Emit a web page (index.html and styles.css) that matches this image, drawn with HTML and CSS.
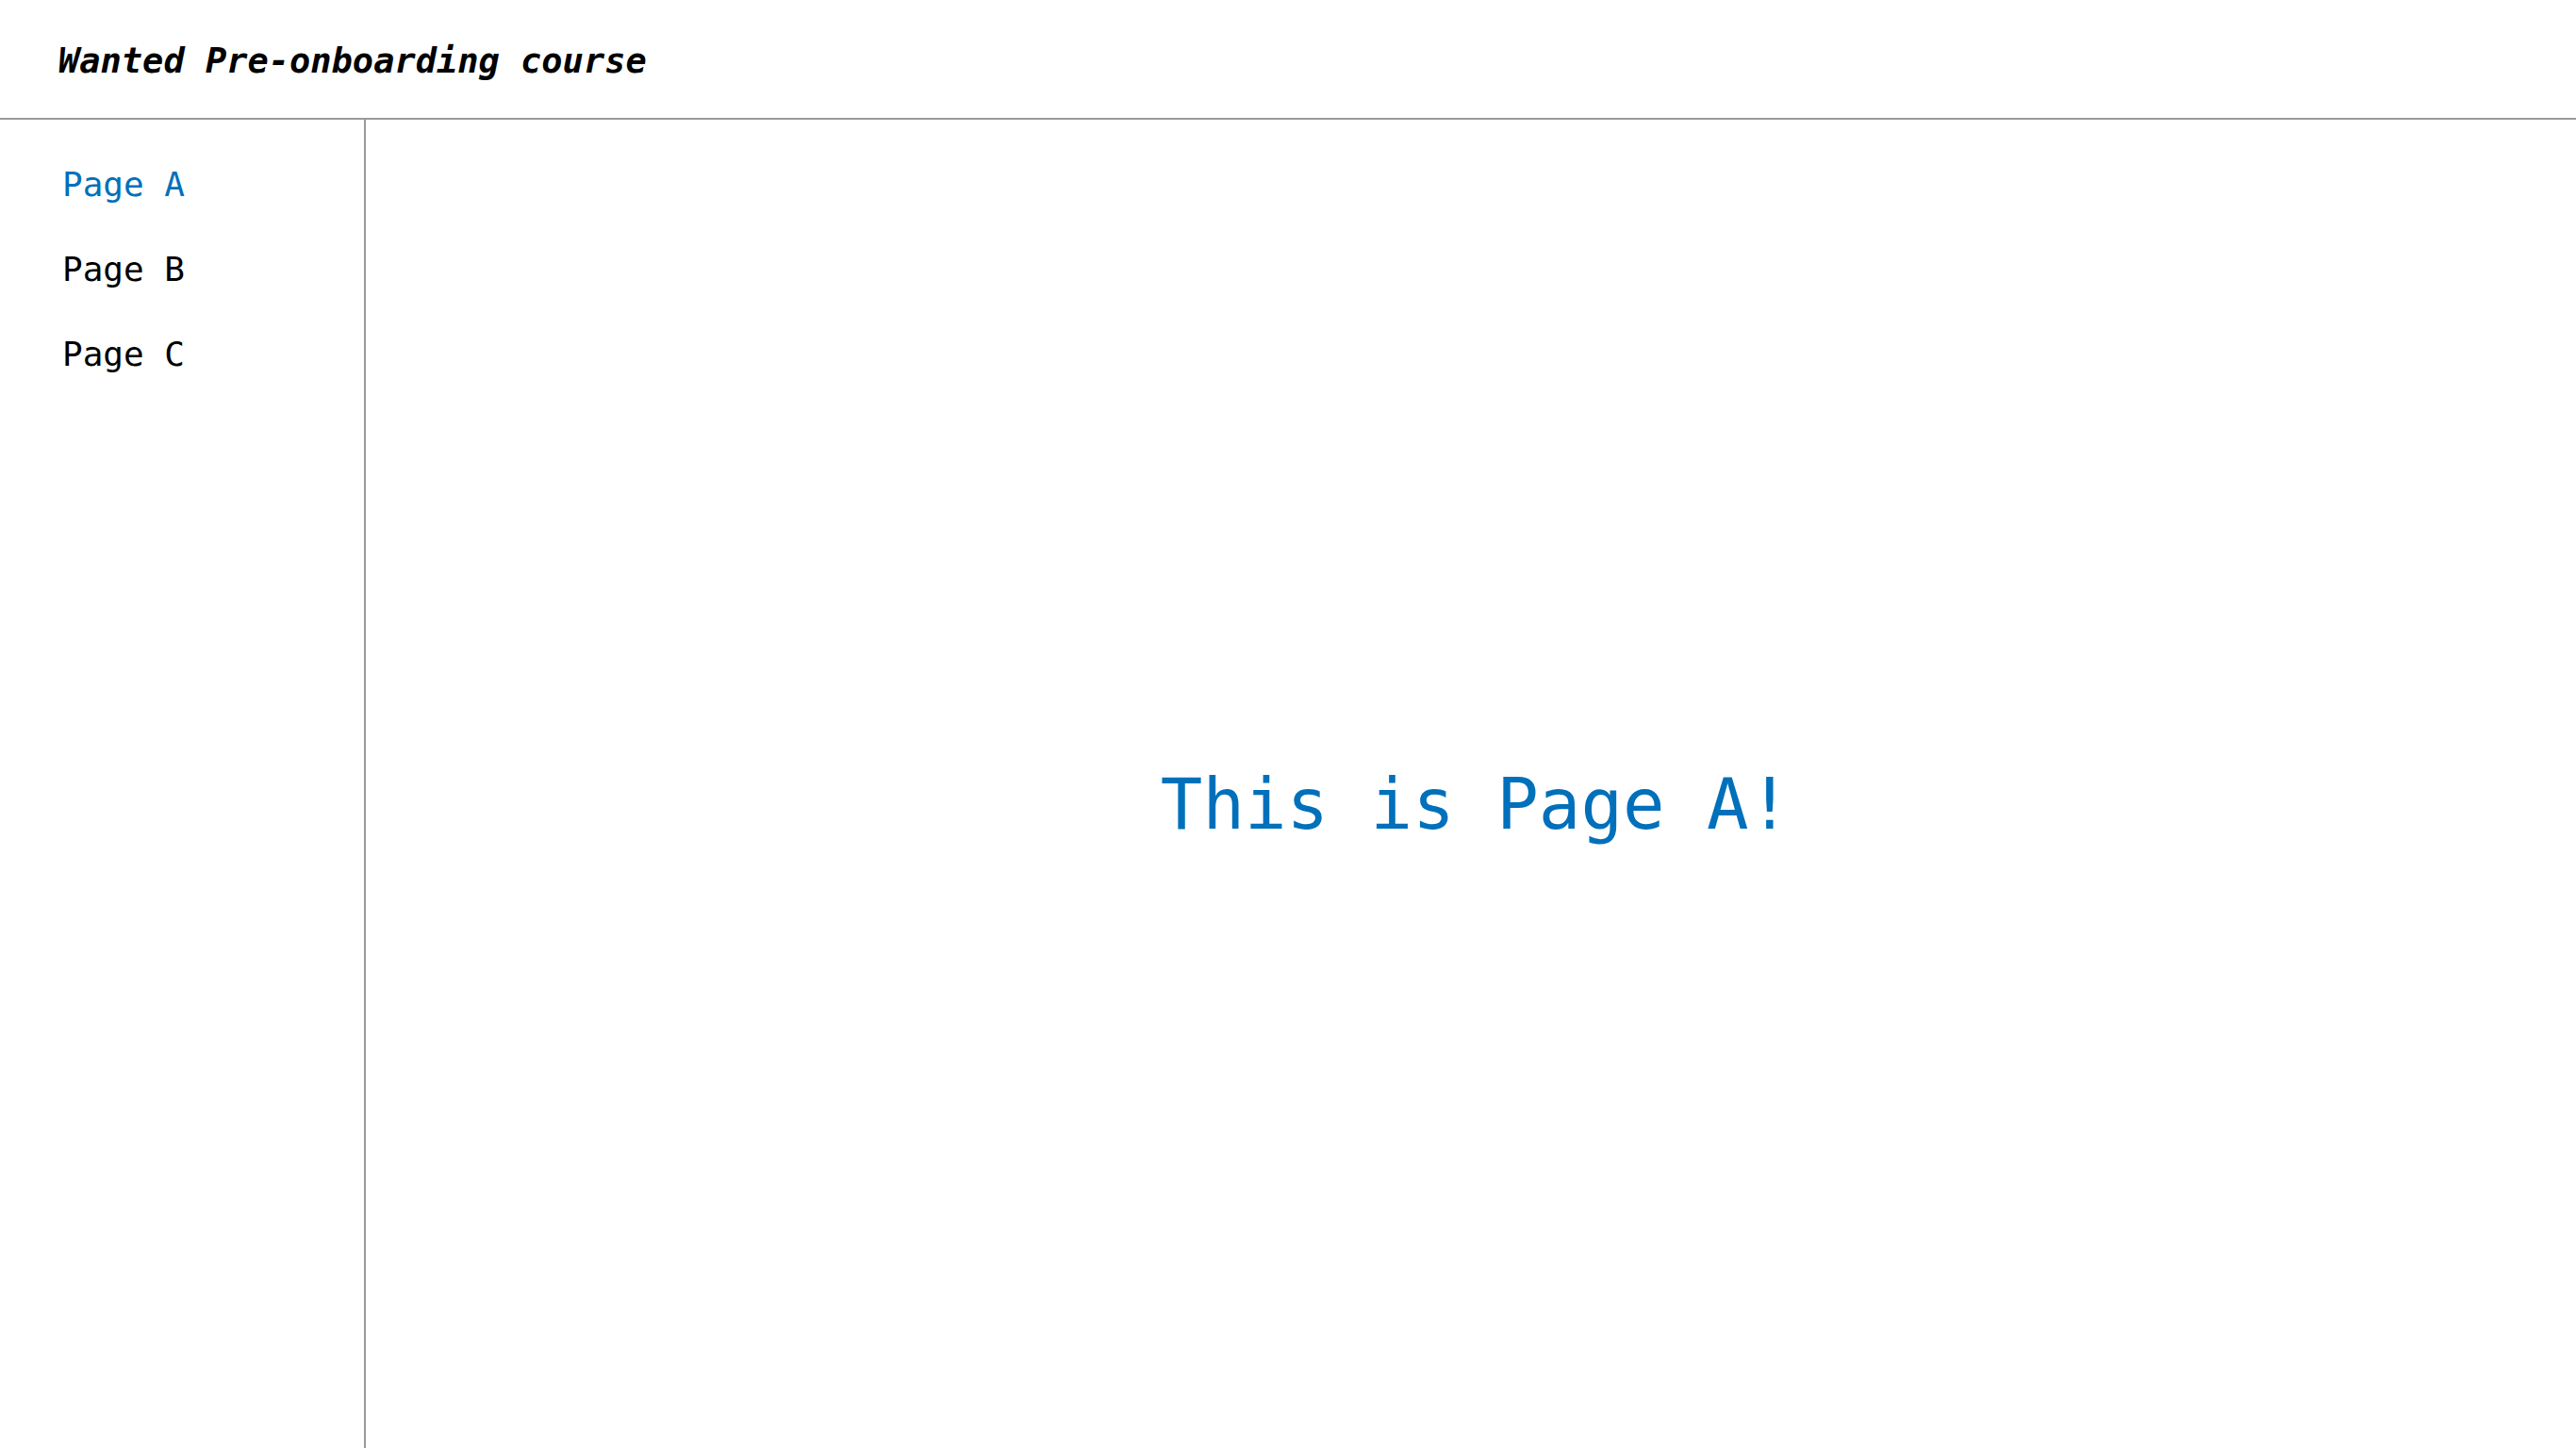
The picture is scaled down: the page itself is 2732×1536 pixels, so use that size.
FILE: index.html
```html
<!DOCTYPE html>
<html lang="en">
<head>
<meta charset="utf-8">
<title>Wanted Pre-onboarding course</title>
<link rel="stylesheet" href="styles.css">
</head>
<body>
<div class="app">
  <header class="header">
    <span class="title">Wanted Pre-onboarding course</span>
  </header>
  <div class="body">
    <nav class="sidebar">
      <a class="nav-item active">Page A</a>
      <a class="nav-item">Page B</a>
      <a class="nav-item">Page C</a>
    </nav>
    <main class="content">
      <h1 class="page-title">This is Page A!</h1>
    </main>
  </div>
</div>
</body>
</html>
```

FILE: styles.css
```css
html, body {
  margin: 0;
  padding: 0;
  height: 100%;
  background: #fff;
  overflow: hidden;
}

.app {
  display: flex;
  flex-direction: column;
  height: 100vh;
  font-family: "DejaVu Sans Mono", "Liberation Mono", monospace;
  color: #000;
}

.header {
  height: 125px;
  border-bottom: 2px solid #9a9a9a;
  padding: 0 0 0 62px;
  display: flex;
  align-items: flex-start;
}

.title {
  margin-top: 43px;
  font-size: 37px;
  line-height: 44px;
  font-weight: bold;
  font-style: italic;
  white-space: pre;
}

.body {
  flex: 1;
  display: flex;
  min-height: 0;
}

.sidebar {
  width: 388px;
  flex-shrink: 0;
  border-right: 2px solid #9a9a9a;
  display: flex;
  flex-direction: column;
  gap: 50px;
  padding: 49px 0 0 66px;
  box-sizing: border-box;
}

.nav-item {
  font-size: 36px;
  line-height: 40px;
  color: #000;
  text-decoration: none;
  white-space: pre;
}

.nav-item.active {
  color: #0070bb;
}

.content {
  flex: 1;
  display: flex;
  align-items: center;
  justify-content: center;
  padding: 42px 0 0 10px;
}

.page-title {
  margin: 0;
  font-size: 74px;
  line-height: 88px;
  font-weight: normal;
  color: #0070bb;
  white-space: pre;
}
```
